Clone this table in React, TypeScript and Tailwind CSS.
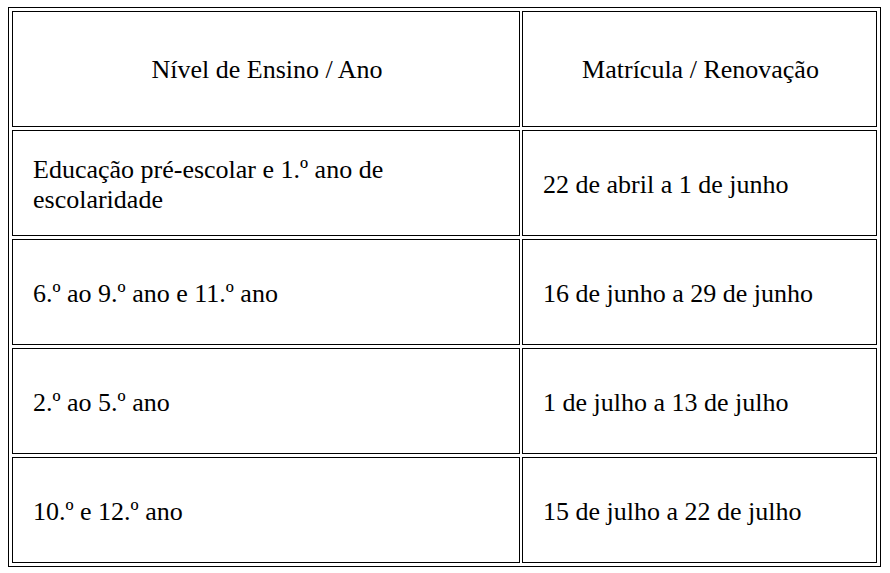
const rows: [string, string][] = [
  ["Educação pré-escolar e 1.º ano de escolaridade", "22 de abril a 1 de junho"],
  ["6.º ao 9.º ano e 11.º ano", "16 de junho a 29 de junho"],
  ["2.º ao 5.º ano", "1 de julho a 13 de julho"],
  ["10.º e 12.º ano", "15 de julho a 22 de julho"],
];

export default function App() {
  return (
    <div className="h-[573px] w-[890px] bg-white pl-[8px] pt-[7px] font-['Liberation_Serif','Times_New_Roman',Times,serif] text-[26px] text-black">
      <div className="grid w-[873px] grid-cols-[508px_355px] grid-rows-[116px_106px_106px_106px_106px] gap-x-[2px] gap-y-[3px] border border-black p-[3px]">
        <div className="flex items-center justify-center border border-black pl-[2px]">Nível de Ensino / Ano</div>
        <div className="flex items-center justify-center border border-black pl-[2px]">Matrícula / Renovação</div>
        {rows.map(([a, b]) => (
          <>
            <div key={a} className="flex items-center border border-black pl-[20px] pr-[100px] pt-[3px] leading-[30px]">{a}</div>
            <div key={b} className="flex items-center border border-black pl-[20px] pt-[3px]">{b}</div>
          </>
        ))}
      </div>
    </div>
  );
}
